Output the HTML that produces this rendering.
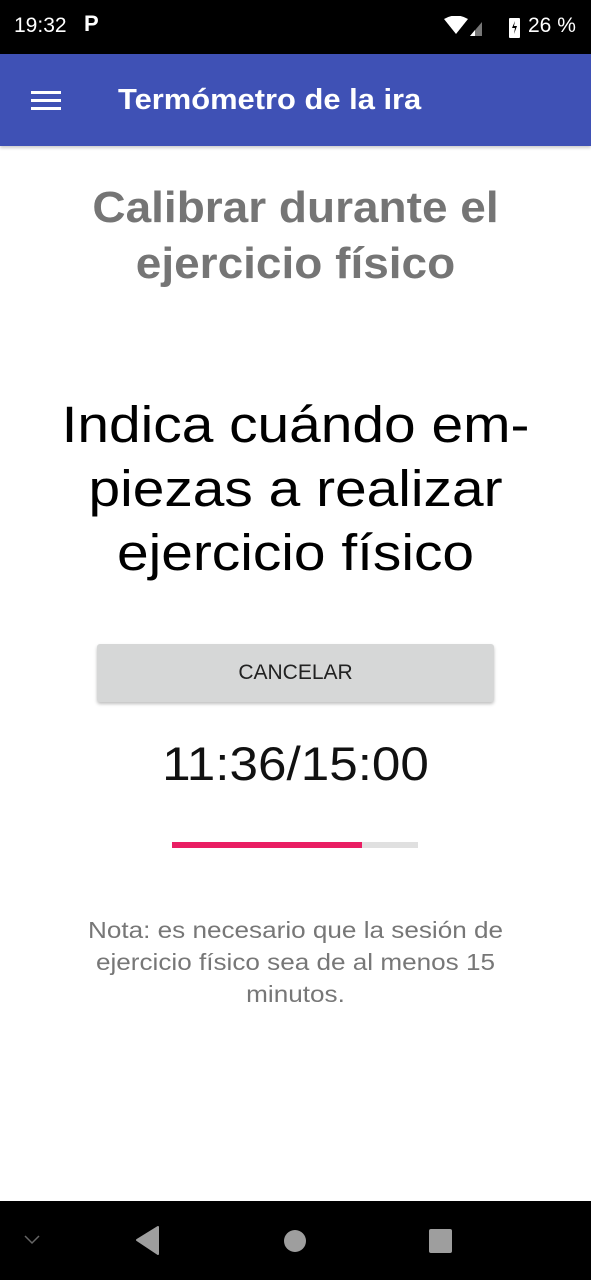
<!DOCTYPE html>
<html><head><meta charset="utf-8"><style>
*{margin:0;padding:0;box-sizing:border-box}
body{width:591px;height:1280px;position:relative;background:#fff;font-family:"Liberation Sans",Roboto,sans-serif;overflow:hidden}
.abs{position:absolute}
.c{position:absolute;left:0;width:591px;text-align:center}
</style></head><body>
<div class="abs" style="left:0;top:0;width:591px;height:54px;background:#000"></div>
<div class="abs" style="left:14px;top:14px;color:#fff;font-size:21px">19:32</div>
<div class="abs" style="left:84px;top:11px;color:#fff;font-size:22px;font-weight:bold">P</div>
<svg class="abs" style="left:444px;top:16px" width="80" height="24">
<path d="M0 3 Q12 -4 24 3 L12 18 Z" fill="#fff"/>
<path d="M26 20 L38 6 L38 20 Z" fill="#777"/><path d="M26 20 L31 14 L31 20Z" fill="#fff"/>
<rect x="65" y="2" width="11" height="20" rx="1" fill="#fff"/><path d="M71 5 L68 12 L71 12 L70 18 L73 10 L70 10Z" fill="#000"/>
</svg>
<div class="abs" style="left:528px;top:14px;color:#fff;font-size:21px">26 %</div>
<div class="abs" style="left:0;top:54px;width:591px;height:92px;background:#3f51b5;box-shadow:0 2px 3px rgba(0,0,0,.2)"></div>
<div class="abs" style="left:31px;top:91px;width:30px;height:3px;background:#fff;box-shadow:0 8px 0 #fff,0 16px 0 #fff"></div>
<div class="abs" style="left:118px;top:84px;color:#fff;font-size:29px;font-weight:bold;transform:scaleX(1.065);transform-origin:0 0">Termómetro de la ira</div>
<div class="c" style="top:180px;font-size:44px;font-weight:bold;color:#757575;line-height:56px;transform:scaleX(1.045)">Calibrar durante el<br>ejercicio físico</div>
<div class="c" style="top:393px;font-size:51px;color:#000;line-height:64px;transform:scaleX(1.115)">Indica cuándo em-<br>piezas a realizar<br>ejercicio físico</div>
<div class="abs" style="left:97px;top:644px;width:397px;height:58px;background:#d6d7d7;border-radius:3px;box-shadow:0 2px 3px rgba(0,0,0,.25);text-align:center;line-height:58px;font-size:21px;color:#222">CANCELAR</div>
<div class="c" style="top:736px;font-size:47px;color:#111;transform:scaleX(1.09)">11:36/15:00</div>
<div class="abs" style="left:172px;top:842px;width:246px;height:6px;background:#e0e0e0"></div>
<div class="abs" style="left:172px;top:842px;width:190px;height:6px;background:#e91e63"></div>
<div class="c" style="top:914px;font-size:23px;color:#777;line-height:32px;transform:scaleX(1.135)">Nota: es necesario que la sesión de<br>ejercicio físico sea de al menos 15<br>minutos.</div>
<div class="abs" style="left:0;top:1201px;width:591px;height:79px;background:#000"></div>
<svg class="abs" style="left:0;top:1201px" width="591" height="79">
<path d="M25 35 L32 42 L39 35" stroke="#666" stroke-width="1.5" fill="none"/>
<path d="M137 39 L158 26 L158 53 Z" fill="#9e9e9e" stroke="#9e9e9e" stroke-width="2" stroke-linejoin="round"/>
<circle cx="295" cy="40" r="11" fill="#9e9e9e"/>
<rect x="429" y="28" width="23" height="24" rx="2" fill="#9e9e9e"/>
</svg>
</body></html>
